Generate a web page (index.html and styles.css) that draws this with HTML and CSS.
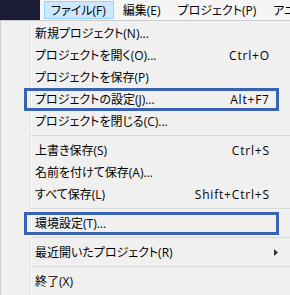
FILE: index.html
```html
<!DOCTYPE html>
<html lang="ja">

<head>
    <meta charset="UTF-8" />
    <meta name="viewport" content="width=device-width, initial-scale=1.0" />
    <title>ファイルメニュー</title>
    <link rel="stylesheet" href="styles.css">
</head>

<body>
    <div class="window">
        <div class="menubar">
            <div class="app-edge"></div>
            <ul class="menubar-items">
                <li class="active">ファイル(F)</li>
                <li>編集(E)</li>
                <li>プロジェクト(P)</li>
                <li>アニメーション(A)</li>
            </ul>
        </div>

        <div class="dropdown">
            <div class="item"><span class="label">新規プロジェクト(N)...</span></div>
            <div class="item"><span class="label">プロジェクトを開く(O)...</span><span class="shortcut">Ctrl+O</span></div>
            <div class="item"><span class="label">プロジェクトを保存(P)</span></div>
            <div class="item marked"><span class="label">プロジェクトの設定(J)...</span><span class="shortcut">Alt+F7</span></div>
            <div class="item"><span class="label">プロジェクトを閉じる(C)...</span></div>
            <div class="separator"></div>
            <div class="item"><span class="label">上書き保存(S)</span><span class="shortcut">Ctrl+S</span></div>
            <div class="item"><span class="label">名前を付けて保存(A)...</span></div>
            <div class="item"><span class="label">すべて保存(L)</span><span class="shortcut">Shift+Ctrl+S</span></div>
            <div class="separator"></div>
            <div class="item marked"><span class="label">環境設定(T)...</span></div>
            <div class="separator"></div>
            <div class="item has-submenu">
                <span class="label">最近開いたプロジェクト(R)</span>
                <svg class="submenu-arrow" width="4" height="7" viewBox="0 0 4 7">
                    <polygon points="0,0 4,3.5 0,7" fill="#333" />
                </svg>
            </div>
            <div class="separator"></div>
            <div class="item"><span class="label">終了(X)</span></div>
        </div>
    </div>
</body>

</html>
```

FILE: styles.css
```css
body {
    margin: 0;
    font-family: "Open Sans", "Noto Sans CJK JP", sans-serif;
    font-size: 12px;
    font-feature-settings: "palt";
    color: #000;
    background: #f0f0f0;
}

.window {
    width: 290px;
    height: 295px;
    overflow: hidden;
}

.menubar {
    display: flex;
    height: 20px;
    background: #f5f5f5;
}

.app-edge {
    width: 40px;
    flex-shrink: 0;
    background: #1c1b36;
}

.menubar-items {
    display: flex;
    margin: 0;
    padding: 0 0 0 4px;
    list-style: none;
    white-space: nowrap;
}

.menubar-items li {
    display: flex;
    align-items: center;
    padding: 0 7px 0 6px;
    margin: 1px 0;
    border: 1px solid transparent;
}

.menubar-items li + li {
    padding-left: 8px;
}

.menubar-items li.active {
    background: #cce8ff;
    border-color: #99d1ff;
}

.dropdown {
    border-top: 1px solid #cccccc;
    border-left: 1px solid #cccccc;
    padding-top: 1px;
    background: linear-gradient(to right,
            transparent 29px,
            #e2e3e3 29px,
            #e2e3e3 30px,
            #ffffff 30px,
            #ffffff 31px,
            transparent 31px), #f0f0f0;
    height: 100%;
}

.item {
    position: relative;
    display: flex;
    align-items: center;
    height: 22px;
    padding: 0 21px 0 34px;
    white-space: nowrap;
}

.item .label {
    flex: 1;
}

.item .shortcut {
    letter-spacing: 0.8px;
    margin-right: -0.8px;
}

.item.has-submenu {
    padding-right: 12px;
}

/* annotation frame drawn over the item */
.item.marked::after {
    position: absolute;
    left: 23px;
    right: 11px;
    top: 0;
    bottom: -1px;
    border: 3px solid #3a62b3;
    content: "";
}

.separator {
    height: 1px;
    margin: 3px 0 3px 30px;
    background: #d7d7d7;
}
```
